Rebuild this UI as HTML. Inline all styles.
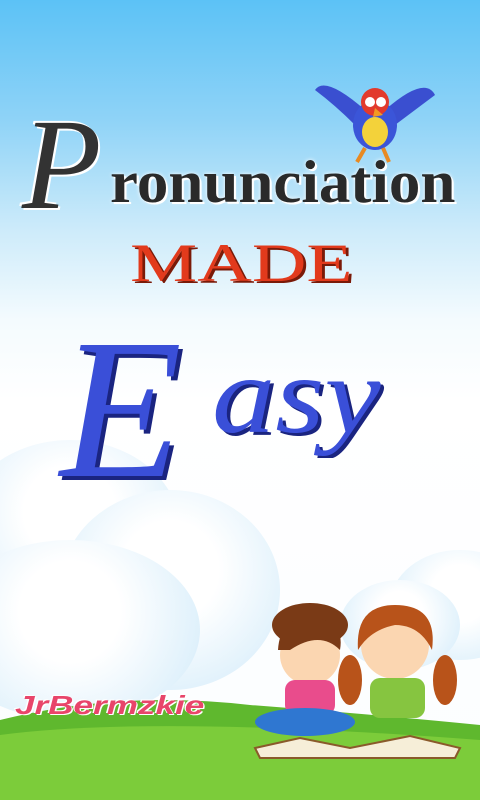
<!DOCTYPE html>
<html><head><meta charset="utf-8"><style>
body{margin:0;width:480px;height:800px;overflow:hidden;position:relative;font-family:"Liberation Serif",serif;
background:linear-gradient(#5cc2f6 0px,#8fd3f7 120px,#cdebfa 230px,#f4fbfe 320px,#ffffff 400px,#fbfdff 800px);}
.t{position:absolute;white-space:nowrap;transform-origin:0 0}
.cloud{position:absolute;border-radius:50%;background:radial-gradient(circle at 50% 40%,#ffffff 30%,#e4f3fc 70%,#cfe9f8 100%)}
</style></head><body>
<div class="cloud" style="left:-40px;top:440px;width:220px;height:180px"></div>
<div class="cloud" style="left:60px;top:490px;width:220px;height:200px"></div>
<div class="cloud" style="left:-60px;top:540px;width:260px;height:180px"></div>
<div class="cloud" style="left:390px;top:550px;width:140px;height:110px"></div>
<div class="cloud" style="left:340px;top:580px;width:120px;height:90px"></div>
<svg class="t" style="left:0;top:0" width="480" height="800">
<path d="M0 720 Q120 690 250 705 Q380 715 480 725 L480 800 L0 800Z" fill="#5fb82e"/>
<path d="M0 735 Q150 715 480 740 L480 800 L0 800Z" fill="#7ccc3a"/>
<g transform="translate(375,120)">
<path d="M-10 -10 Q-50 -45 -60 -30 Q-40 -15 -20 5Z" fill="#3a4fd0"/>
<path d="M10 -10 Q50 -45 60 -25 Q40 -10 20 5Z" fill="#3a4fd0"/>
<ellipse cx="0" cy="5" rx="22" ry="25" fill="#3b55d8"/>
<ellipse cx="0" cy="12" rx="13" ry="15" fill="#f3d23a"/>
<circle cx="0" cy="-18" r="14" fill="#e23a2c"/>
<circle cx="-5" cy="-18" r="5" fill="#fff"/><circle cx="6" cy="-18" r="5" fill="#fff"/>
<path d="M0 -12 L8 -5 L-2 -3Z" fill="#f29a22"/>
<path d="M-10 28 L-18 42 M8 28 L14 42" stroke="#e88a22" stroke-width="4"/>
</g>
<g>
<ellipse cx="310" cy="625" rx="38" ry="22" fill="#7a3a16"/>
<circle cx="310" cy="655" r="30" fill="#fbd6b1"/>
<path d="M278 650 Q280 615 315 618 Q345 622 340 650 Q320 630 290 650Z" fill="#7a3a16"/>
<rect x="285" y="680" width="50" height="35" rx="10" fill="#e94c8c"/>
<ellipse cx="305" cy="722" rx="50" ry="14" fill="#2f77d1"/>
<circle cx="395" cy="645" r="34" fill="#fbd6b1"/>
<path d="M358 650 Q355 605 395 605 Q438 605 432 650 Q420 625 395 625 Q370 630 358 650Z" fill="#b8531a"/>
<ellipse cx="350" cy="680" rx="12" ry="25" fill="#b8531a"/>
<ellipse cx="445" cy="680" rx="12" ry="25" fill="#b8531a"/>
<rect x="370" y="678" width="55" height="40" rx="10" fill="#86c540"/>
<path d="M255 748 L300 738 L350 748 L410 736 L460 748 L455 758 L260 758Z" fill="#f6eed8" stroke="#8a5a2a" stroke-width="2"/>
</g>
</svg>
<div class="t" style="left:22px;top:100px;font-size:130px;color:#333;font-style:italic;line-height:1;text-shadow:2px 2px 0 #fff,-2px -2px 0 #fff">P</div>
<div class="t" style="left:110px;top:152px;font-size:60px;font-weight:bold;color:#2a2a2a;line-height:1;transform:scaleX(1.05);text-shadow:0 0 4px #fff,2px 2px 0 #fff">ronunciation</div>
<div class="t" style="left:130px;top:236px;font-size:54px;color:#e23a1c;line-height:1;transform:scaleX(1.4);text-shadow:2px 2px 0 #7a1a08">MADE</div>
<div class="t" style="left:60px;top:310px;font-size:200px;color:#3a4fd8;font-style:italic;line-height:1;text-shadow:4px 4px 0 #1a2480">E</div>
<div class="t" style="left:212px;top:340px;font-size:110px;color:#3a4fd8;font-style:italic;line-height:1;transform:scaleX(1.15);text-shadow:3px 3px 0 #1a2480">asy</div>
<div class="t" style="left:15px;top:690px;font-family:'Liberation Sans',sans-serif;font-size:26px;font-weight:bold;font-style:italic;color:#e8456a;transform:scaleX(1.35);text-shadow:1px 1px 0 #fff,-1px -1px 0 #fff">JrBermzkie</div>
</body></html>
